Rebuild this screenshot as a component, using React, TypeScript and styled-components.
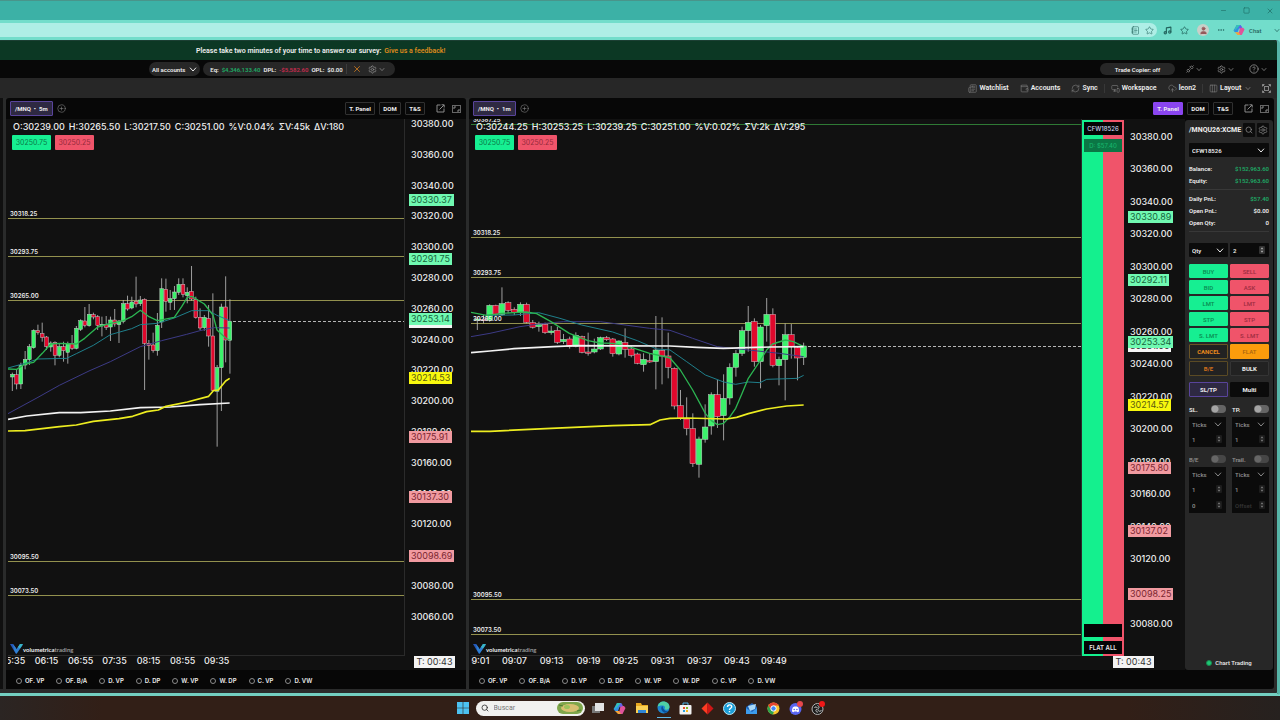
import React from "react";
import styled, { createGlobalStyle } from "styled-components";
import {
  CircleHelp,
  CirclePlus,
  CloudUpload,
  Columns3,
  Ellipsis,
  Minus,
  MonitorSmartphone,
  Music,
  Newspaper,
  NotebookText,
  RefreshCw,
  Search,
  Settings,
  Square,
  Star,
  Unplug,
  User,
  Wallet,
  X,
} from "lucide-react";

const GlobalStyle = createGlobalStyle`
  * { box-sizing: border-box; }
  html, body { margin: 0; padding: 0; background: #101010; }
  body {
    font-family: Roboto, "Liberation Sans", sans-serif;
    font-size: 7px;
    font-weight: 600;
    color: #eee;
  }
  button, input, select { font: inherit; color: inherit; margin: 0; border: 0; padding: 0; background: none; }
  svg { display: block; flex: none; }
`;

/* ---------- browser frame ---------- */

const Desktop = styled.div`
  min-height: 100vh;
  display: flex;
  flex-direction: column;
  background: #6fdccb;
`;

const TitleBar = styled.div`
  height: 20px;
  display: flex;
  align-items: center;
  justify-content: flex-end;
  gap: 16px;
  padding-right: 7px;
  background: #3cb1a6;
  border-top: 1px solid #49958b;
  color: #1d6a62;
`;

const WindowButton = styled.button`
  display: flex;
  width: 7px;
  justify-content: center;
`;

const BrowserBar = styled.div`
  height: 20px;
  display: flex;
  align-items: center;
  background: #72ddcb;
  color: #23645d;
`;

const AddressBar = styled.div`
  flex: 1;
  height: 14px;
  display: flex;
  align-items: center;
  justify-content: flex-end;
  gap: 5px;
  padding-right: 3px;
  border-radius: 0 7px 7px 0;
  background: #aeeee6;
`;

const BrowserTools = styled.div`
  width: 123px;
  display: flex;
  align-items: center;
  gap: 8px;
  padding-left: 6px;
`;

const Avatar = styled.span`
  width: 12px;
  height: 12px;
  border-radius: 50%;
  display: grid;
  place-items: center;
  background: #c9cfc8;
  color: #95595b;
`;

const CopilotChat = styled.button`
  flex: 1;
  display: flex;
  align-items: center;
  gap: 4px;
  font-size: 6px;
  font-weight: 500;
`;

const WebPage = styled.main`
  flex: 1;
  display: flex;
  flex-direction: column;
  background: #2a2b2b;
  border-right: 3px solid #56b5a8;
  border-bottom: 3px solid #73cfc1;
  border-radius: 0 4px 4px 0;
`;

/* ---------- app header ---------- */

const Survey = styled.div`
  height: 20px;
  padding-left: 196px;
  display: flex;
  align-items: center;
  gap: 3px;
  background: #0c3824;
  border-top: 1px solid #1c3f33;
  border-radius: 0 4px 0 0;
`;

const SurveyLink = styled.a`
  color: #dd8a1c;
  text-decoration: none;
`;

const AccountBar = styled.div`
  height: 18px;
  display: flex;
  align-items: center;
  gap: 3px;
  padding: 0 10px 0 149px;
  background: #080808;
  font-size: 6px;
`;

const Pill = styled.div<{ $pad?: number; $gap?: number }>`
  height: 14px;
  display: flex;
  align-items: center;
  gap: ${(p) => p.$gap ?? 4}px;
  padding: 0 ${(p) => p.$pad ?? 4}px;
  border-radius: 7px;
  background: #272727;
`;

const Spacer = styled.span`
  flex: 1;
`;

const Tone = styled.span<{ $c: string }>`
  color: ${(p) => p.$c};
`;

const VLine = styled.span`
  width: 1px;
  height: 10px;
  background: #3c3c3c;
`;

const MenuButton = styled.button<{ $ml?: number }>`
  display: flex;
  align-items: center;
  gap: 2px;
  margin-left: ${(p) => p.$ml ?? 0}px;
  color: #8d8d8d;
`;

const CopierButton = styled.button`
  width: 75px;
  height: 12px;
  border-radius: 6px;
  background: #272727;
`;

const NavBar = styled.nav`
  height: 20px;
  display: flex;
  align-items: center;
  justify-content: flex-end;
  gap: 11px;
  padding-right: 6px;
  background: #272727;
`;

const NavItem = styled.button<{ $rule?: boolean }>`
  display: flex;
  align-items: center;
  gap: 2px;
  ${(p) => p.$rule && "margin-left: -5px; padding-left: 6px; border-left: 1px solid #383838;"}
  svg { color: #858585; }
`;

/* ---------- workspace ---------- */

const Workspace = styled.div`
  flex: 1;
  display: flex;
  gap: 3px;
  padding: 0 3px 4px 0;
`;

const PanelEdge = styled.div`
  width: 3px;
  background: #101010;
`;

const Panel = styled.section<{ $grow: number }>`
  flex: ${(p) => p.$grow} 1 0;
  min-width: 0;
  display: flex;
  flex-direction: column;
  background: #070707;
  border-radius: 3px;
`;

const PanelHead = styled.header`
  height: 21px;
  display: flex;
  align-items: center;
  gap: 4px;
  padding: 0 5px 0 4px;
  font-size: 6px;
  font-weight: 700;
`;

const SymbolTab = styled.button`
  height: 15px;
  padding: 0 4px;
  border: 1px solid #59449b;
  border-radius: 1px;
  background: #2e2942;
  white-space: pre;
`;

const HeadIcon = styled.button<{ $ml?: number }>`
  display: flex;
  margin-left: ${(p) => p.$ml ?? 0}px;
  color: #8a8a8a;
`;

const HeadButton = styled.button<{ $active?: boolean; $w: number }>`
  width: ${(p) => p.$w}px;
  height: 13px;
  border: 1px solid ${(p) => (p.$active ? "#8a45f0" : "#303030")};
  border-radius: 1px;
  background: ${(p) => (p.$active ? "#8a45f0" : "#0a0a0a")};
`;

const PanelBody = styled.div`
  flex: 1;
  display: flex;
  min-height: 0;
`;

const ChartArea = styled.div`
  flex: 1;
  min-width: 0;
  display: flex;
  flex-direction: column;
  background: #111;
  font-family: Inter, "Liberation Sans", sans-serif;
`;

const PlotRow = styled.div`
  flex: 1;
  display: flex;
  padding-left: 2px;
`;

const Plot = styled.div`
  flex: 1;
  min-width: 0;
  position: relative;
  border-right: 1px solid #2b2b2b;
  border-bottom: 1px solid #2b2b2b;
`;

const PlotSvg = styled.svg`
  position: absolute;
  inset: 0;
  width: 100%;
  height: 100%;
`;

const PlotOverlay = styled.div`
  position: absolute;
  top: 2px;
  left: 4px;
`;

const Ohlc = styled.div`
  display: flex;
  gap: 4px;
  padding-left: 1px;
  font-size: 9px;
  line-height: 12px;
  font-weight: 500;
  white-space: nowrap;
`;

const QuoteRow = styled.div`
  display: flex;
  gap: 4px;
  margin-top: 2px;
`;

const Quote = styled.button<{ $buy?: boolean }>`
  width: 39px;
  height: 15px;
  font-size: 7px;
  font-weight: 400;
  border-radius: 1px;
  color: ${(p) => (p.$buy ? "#0a7a48" : "#962a3a")};
  background: ${(p) => (p.$buy ? "#16ef92" : "#f0546a")};
`;

const Watermark = styled.div`
  position: absolute;
  left: 2px;
  bottom: 1px;
  display: flex;
  align-items: center;
  font-size: 6px;
  font-weight: 700;
  font-family: Lato, "Noto Sans", sans-serif;
`;

const AxisSvg = styled.svg<{ $w: number }>`
  width: ${(p) => p.$w}px;
  min-height: 530px;
`;

const TimeRow = styled.div`
  height: 14px;
  display: flex;
  justify-content: space-between;
  font-size: 9px;
  font-weight: 500;
  padding: 0 0 0 2px;
`;

const Times = styled.div<{ $gap: number; $cut: number }>`
  display: flex;
  gap: ${(p) => p.$gap}px;
  padding-right: 10px;
  overflow: hidden;
  line-height: 10px;
  white-space: nowrap;
  span { flex: none; width: 25px; text-align: center; }
  span:first-child { margin-left: -${(p) => p.$cut}px; }
`;

const Countdown = styled.span<{ $mr: number }>`
  height: 12px;
  width: 41px;
  margin-right: ${(p) => p.$mr}px;
  text-align: center;
  line-height: 12px;
  font-weight: 400;
  color: #333;
  background: #f4f4f4;
  z-index: 1;
`;

const Studies = styled.div`
  height: 19px;
  display: flex;
  align-items: center;
  gap: 12px;
  padding-left: 10px;
  padding-top: 2px;
  font-family: Inter, "Liberation Sans", sans-serif;
  font-size: 6px;
  font-weight: 600;
  background: #070707;
`;

const Study = styled.label`
  display: flex;
  align-items: center;
  gap: 3px;
  input {
    appearance: none;
    width: 6px;
    height: 6px;
    border: 1px solid #8a8a8a;
    border-radius: 50%;
  }
`;

/* ---------- ladder between the plot and the price axis ---------- */

const Ladder = styled.div`
  width: 42px;
  display: flex;
  flex-direction: column;
  gap: 4px;
  padding: 2px;
  margin-top: 1px;
  font-size: 6px;
  font-weight: 500;
  background: linear-gradient(90deg, #14f08e 21px, #f0546a 21px);
`;

const LadderCell = styled.div<{ $pnl?: boolean }>`
  height: 13px;
  display: grid;
  place-items: center;
  color: ${(p) => (p.$pnl ? "#17b46b" : "#cfd6ef")};
  background: ${(p) => (p.$pnl ? "#0b7745" : "#050505")};
`;

const FlatAll = styled.button`
  height: 13px;
  background: #050505;
  font-weight: 600;
`;

/* ---------- trading side panel ---------- */

const TradePanel = styled.aside`
  width: 88px;
  margin: 1px 1px 19px 0;
  padding: 3px 4px 4px;
  display: flex;
  flex-direction: column;
  border-radius: 3px;
  background: #272727;
  font-size: 6px;
`;

const Row = styled.div<{ $mt?: number; $gap?: number }>`
  display: flex;
  align-items: center;
  gap: ${(p) => p.$gap ?? 2}px;
  margin-top: ${(p) => p.$mt ?? 0}px;
`;

const Ticker = styled.strong`
  flex: 1;
  min-width: 0;
  font-size: 7px;
  font-weight: 700;
  white-space: nowrap;
`;

const IconButton = styled.button`
  width: 12px;
  height: 14px;
  flex: none;
  display: grid;
  place-items: center;
  background: #0c0c0c;
  color: #999;
  border-radius: 1px;
`;

const Field = styled.div<{ $h?: number; $dim?: boolean }>`
  flex: 1;
  min-width: 0;
  height: ${(p) => p.$h ?? 14}px;
  display: flex;
  align-items: center;
  padding: 0 4px 0 3px;
  background: #0b0b0b;
  border-radius: 1px;
  color: ${(p) => (p.$dim ? "#8a8a8a" : "#eee")};
  select, input {
    flex: 1;
    min-width: 0;
    width: 0;
    appearance: none;
    outline: none;
  }
  input::placeholder { color: #333; }
`;

const Stats = styled.div`
  margin-top: 5px;
  margin-bottom: 1px;
`;

const Stat = styled.div`
  height: 12px;
  display: flex;
  align-items: center;
  justify-content: space-between;
`;

const Divider = styled.hr`
  width: 100%;
  height: 1px;
  border: 0;
  margin: 3px 0 2px;
  background: #383838;
`;

const OrderGrid = styled.div<{ $mt: number }>`
  display: grid;
  grid-template-columns: 1fr 1fr;
  gap: 2px;
  margin-top: ${(p) => p.$mt}px;
`;

type Kind = "buy" | "sell" | "cancel" | "flat" | "be" | "bulk" | "tabOn" | "tab";
const kinds: Record<Kind, [string, string, string]> = {
  buy: ["#16ef92", "#0a8a50", "#16ef92"],
  sell: ["#f0546a", "#9c2c40", "#f0546a"],
  cancel: ["#222", "#e88a1c", "#6a5424"],
  flat: ["#fb9c0c", "#a86410", "#fb9c0c"],
  be: ["#222", "#d0701c", "#5a4a24"],
  bulk: ["#222", "#eee", "#343434"],
  tabOn: ["#2e2942", "#eee", "#59449b"],
  tab: ["#0b0b0b", "#eee", "#0b0b0b"],
};

const OrderButton = styled.button<{ $kind: Kind }>`
  height: ${(p) => (p.$kind === "buy" || p.$kind === "sell" ? 14 : 15)}px;
  background: ${(p) => kinds[p.$kind][0]};
  color: ${(p) => kinds[p.$kind][1]};
  border: 1px solid ${(p) => kinds[p.$kind][2]};
  border-radius: 1px;
  font-weight: ${(p) => (p.$kind === "buy" || p.$kind === "sell" || p.$kind === "flat" ? 500 : 700)};
`;

const Switch = styled.label<{ $dim?: boolean }>`
  flex: 1;
  height: 10px;
  display: flex;
  align-items: center;
  justify-content: space-between;
  opacity: ${(p) => (p.$dim ? 0.5 : 1)};
  input {
    appearance: none;
    width: 15px;
    height: 8px;
    border-radius: 4px;
    background: radial-gradient(circle at 4px 4px, #a5a5a5 3px, #656565 4px);
  }
`;

const FieldStack = styled.div`
  flex: 1;
  min-width: 0;
  background: #0b0b0b;
  border-radius: 1px;
`;

const Status = styled.div`
  margin-top: auto;
  display: flex;
  align-items: center;
  justify-content: center;
  gap: 3px;
  font-weight: 500;
`;

const Dot = styled.span`
  width: 6px;
  height: 6px;
  border-radius: 50%;
  background: #1fc774;
  border: 1px solid #168a50;
`;

/* ---------- taskbar ---------- */

const Taskbar = styled.footer`
  height: 24px;
  display: flex;
  align-items: center;
  justify-content: center;
  gap: 8px;
  background: linear-gradient(90deg, #2b2523, #321f17 8%, #321f17 88%, #26211f);
`;

const TaskSearch = styled.label`
  width: 109px;
  height: 15px;
  margin: 0 -2px;
  display: flex;
  align-items: center;
  gap: 5px;
  padding: 0 2px 0 5px;
  border-radius: 8px;
  background: #f1f1ef;
  color: #333;
  input { flex: 1; min-width: 0; outline: none; font-weight: 400; }
  input::placeholder { color: #777; }
`;

const TaskIcon = styled.button<{ $running?: boolean }>`
  width: 14px;
  height: 20px;
  display: flex;
  align-items: center;
  justify-content: center;
  border-bottom: ${(p) => (p.$running ? "1px solid #5fb8e8" : "0")};
`;

/* ---------- chart data ---------- */

/* [direction, body top, body bottom, wick top, wick bottom], in thirds of a pixel */
type Candle = [0 | 1, number, number, number, number];

const candles5m: Candle[] = [
  [1, 523, 531, 518, 573], [0, 524, 552, 510, 568], [1, 496, 552, 488, 567], [1, 478, 495, 453, 508],
  [1, 440, 479, 432, 495], [1, 391, 443, 388, 446], [0, 392, 398, 374, 404], [0, 401, 412, 368, 425],
  [0, 411, 440, 408, 450], [1, 429, 441, 424, 455], [0, 428, 466, 424, 496], [1, 440, 466, 432, 472],
  [0, 440, 452, 425, 485], [1, 431, 457, 425, 491], [0, 431, 445, 405, 450], [1, 385, 445, 378, 448],
  [1, 362, 388, 358, 393], [0, 363, 376, 321, 382], [1, 343, 377, 312, 380], [0, 344, 351, 338, 358],
  [0, 350, 376, 345, 390], [1, 373, 378, 350, 409], [0, 374, 382, 348, 390], [1, 360, 381, 350, 423],
  [0, 360, 372, 327, 380], [1, 363, 374, 360, 429], [1, 311, 364, 300, 370], [0, 311, 327, 287, 332],
  [1, 306, 324, 290, 328], [0, 304, 312, 230, 322], [1, 300, 311, 288, 318], [0, 298, 430, 295, 570],
  [0, 430, 437, 420, 479], [0, 435, 452, 398, 458], [1, 376, 452, 339, 467], [1, 266, 366, 235, 384],
  [0, 268, 304, 236, 335], [1, 296, 307, 270, 330], [1, 276, 296, 258, 330], [1, 253, 277, 235, 285],
  [0, 253, 283, 235, 292], [1, 277, 287, 262, 310], [0, 274, 297, 198, 302], [0, 298, 353, 290, 356],
  [0, 352, 384, 325, 390], [1, 352, 383, 345, 392], [0, 355, 408, 315, 440], [0, 408, 571, 280, 573],
  [1, 503, 574, 495, 740], [1, 321, 503, 311, 633], [0, 321, 420, 229, 487], [1, 364, 421, 298, 521],
];

const candles1m: Candle[] = [
  [1, 147, 150, 140, 180], [0, 148, 152, 135, 160], [1, 106, 151, 103, 155], [0, 106, 134, 104, 138],
  [1, 101, 134, 52, 138], [0, 98, 121, 94, 130], [0, 118, 128, 112, 135], [1, 103, 128, 97, 138],
  [0, 103, 157, 98, 160], [0, 158, 172, 150, 176], [1, 163, 170, 155, 185], [0, 163, 188, 158, 192],
  [1, 183, 188, 168, 194], [0, 181, 217, 170, 222], [1, 208, 215, 192, 222], [0, 207, 230, 200, 236],
  [1, 196, 229, 187, 232], [0, 200, 247, 197, 250], [0, 246, 249, 188, 257], [1, 237, 246, 206, 250],
  [1, 203, 237, 200, 240], [0, 203, 209, 198, 213], [0, 207, 251, 204, 260], [1, 213, 252, 211, 256],
  [0, 218, 238, 175, 263], [0, 237, 256, 228, 262], [0, 252, 280, 248, 283], [1, 268, 284, 250, 305],
  [0, 272, 276, 250, 279], [1, 240, 275, 138, 358], [0, 241, 258, 142, 343], [0, 258, 292, 188, 325],
  [0, 295, 408, 292, 418], [0, 407, 446, 360, 450], [0, 447, 476, 382, 496], [0, 476, 581, 430, 591],
  [1, 507, 583, 500, 623], [1, 471, 508, 403, 518], [1, 374, 468, 367, 494], [0, 374, 440, 330, 474],
  [1, 385, 437, 313, 511], [1, 292, 384, 280, 404], [1, 250, 292, 240, 320], [1, 182, 250, 170, 258],
  [1, 157, 182, 108, 245], [0, 155, 275, 145, 290], [1, 171, 275, 165, 355], [1, 133, 167, 84, 215],
  [0, 133, 286, 115, 292], [1, 268, 287, 260, 346], [1, 194, 269, 160, 391], [0, 194, 230, 162, 266],
  [0, 233, 264, 228, 331], [1, 228, 262, 218, 285],
];

type Curve = [string, number, string];

const curves5m: Curve[] = [
  ["#3c3a86", 3, "24,641 114,592 178,556 267,513 331,485 421,440 485,422 560,403 600,392 640,383 689,384"],
  ["#1f7f8c", 3, "24,504 75,490 114,477 200,475 229,461 280,436 331,404 395,386 421,374 472,370 523,354 575,332 626,332 651,346 689,362"],
  ["#2cb552", 4, "24,507 50,508 75,492 101,487 127,460 152,432 180,430 229,432 254,415 293,381 331,370 370,362 395,350 421,331 447,350 472,362 523,352 545,320 562,292 575,289 613,312 639,345 651,390 677,414 689,420"],
  ["#f2f2f2", 5, "24,658 80,648 178,638 242,638 331,633 421,623 511,621 600,614 689,609"],
  ["#eded20", 5, "24,693 75,692 178,680 229,675 280,664 357,656 398,649 440,635 475,630 498,619 562,606 626,589 640,572 655,570 677,543 689,535"],
];

const curves1m: Curve[] = [
  ["#3c3a86", 3, "3,200 60,190 150,170 206,162 280,155 391,155 465,165 539,175 600,181 668,205 742,230 835,240 928,250 1001,260"],
  ["#1f7f8c", 3, "50,136 132,135 206,128 270,145 335,165 428,186 502,212 560,237 600,240 650,275 706,315 761,336 797,343 835,336 870,338 890,328 983,325 1001,316"],
  ["#2cb552", 4, "3,127 50,136 95,130 132,128 169,126 200,131 243,155 298,190 354,212 391,219 428,220 484,232 539,250 576,258 600,264 631,300 668,360 706,430 724,452 742,464 761,460 780,440 797,415 817,368 835,325 872,270 890,240 908,222 946,210 970,215 1001,230"],
  ["#f2f2f2", 5, "3,248 60,243 132,236 250,230 317,227 600,228 680,232 760,235 900,231 1001,230"],
  ["#eded20", 5, "3,484 60,484 243,475 428,467 540,464 570,450 600,445 650,444 770,447 800,442 835,431 890,417 950,408 1001,405"],
];

type Level = [number, string, boolean?];
type Badge = [number, string, string, number];

interface ChartProps {
  candles: Candle[];
  curves: Curve[];
  shift: [number, number];
  first: number;
  step: number;
  body: number;
  levels: Level[];
  last: number;
  lastFrom: number;
}

function PriceChart({ candles, curves, shift, first, step, body, levels, last, lastFrom }: ChartProps) {
  return (
    <PlotSvg role="img" aria-label="Price chart">
      {levels.map(([y, label, green]) => (
        <line key={label} x1="0" x2="100%" y1={y + 0.5} y2={y + 0.5} stroke={green ? "#2f7a35" : "#93914e"} />
      ))}
      <line x1={lastFrom} x2="100%" y1={last} y2={last} stroke="#b5b5b5" strokeDasharray="3 2" />
      <g transform={`translate(${shift[0]} ${shift[1]}) scale(0.33333)`}>
        {candles.map(([up, top, bottom, high, low], i) => {
          const x = first + i * step;
          return (
            <g key={i}>
              <line x1={x} x2={x} y1={high} y2={low} stroke="#b5b5b5" strokeWidth="2.6" />
              <rect x={x - body / 2} y={top} width={body} height={Math.max(bottom - top, 4)} fill={up ? "#3bf26b" : "#e0082c"} stroke="#d0d0d0" strokeWidth="1.4" />
            </g>
          );
        })}
        {curves.map(([color, width, points]) => (
          <polyline key={color} points={points} fill="none" stroke={color} strokeWidth={width} strokeLinejoin="round" />
        ))}
      </g>
      {levels.map(([y, label]) => (
        <text key={label} x="2" y={y - 2} fill="#eee" fontSize="6">{label}</text>
      ))}
    </PlotSvg>
  );
}

const badgeColors: Record<string, [string, string]> = {
  green: ["#70f9b1", "#17633c"],
  yellow: ["#f8f80e", "#5c5c10"],
  pink: ["#f19aa0", "#7b2630"],
  white: ["#f4f4f4", "#333333"],
};

interface AxisProps {
  width: number;
  from: number;
  to: number;
  top: number;
  perStep: number;
  badges: Badge[];
}

function PriceAxis({ width, from, to, top, perStep, badges }: AxisProps) {
  const prices: number[] = [];
  for (let p = from; p >= to; p -= 20) prices.push(p);
  return (
    <AxisSvg $w={width} aria-label="Price axis">
      {prices.map((p, i) => (
        <text key={p} x={width - 55} y={top + i * perStep + 3} fill="#eee" fontSize="9" fontWeight="500">{p}.00</text>
      ))}
      {badges.map(([y, label, tone, w]) => (
        <g key={y}>
          <rect x={width - 57} y={y - 6} width={w} height="12" fill={badgeColors[tone][0]} />
          <text x={width - 55} y={y + 3} fill={badgeColors[tone][1]} fontSize="9" fontWeight="400">{label}</text>
        </g>
      ))}
    </AxisSvg>
  );
}

function Chevron({ w = 8 }: { w?: number }) {
  return (
    <svg width={w} height="5" viewBox="0 0 8 5" fill="none" stroke="currentColor">
      <path d="M1 .7L4 4 7 .7" />
    </svg>
  );
}

function Logo() {
  return (
    <Watermark>
      <svg width="13" height="10" viewBox="0 0 13 10">
        <path d="M0 0h3l3 4v6z" fill="#2457b8" />
        <path d="M3 0l3.500 5L10 0l3 .5L6.500 10 4 6z" fill="#2f7fd0" />
        <path d="M10 0h3l-3 4.500-2-1.500z" fill="#38b6c6" />
      </svg>
      <span>volumetrica<Tone $c="#999">trading</Tone></span>
    </Watermark>
  );
}

const studies = ["OF. VP", "OF. B/A", "D. VP", "D. DP", "W. VP", "W. DP", "C. VP", "D. VW"];

function StudyRow() {
  return (
    <Studies>
      {studies.map((s) => (
        <Study key={s}>
          <input type="checkbox" />
          {s}
        </Study>
      ))}
    </Studies>
  );
}

function Head({ frame, active }: { frame: string; active?: boolean }) {
  return (
    <PanelHead>
      <SymbolTab>{"/MNQ  •  " + frame}</SymbolTab>
      <HeadIcon aria-label="Add tab"><CirclePlus size={9} strokeWidth={1.5} /></HeadIcon>
      <Spacer />
      <HeadButton $w={30} $active={active}>T. Panel</HeadButton>
      <HeadButton $w={22}>DOM</HeadButton>
      <HeadButton $w={20}>T&amp;S</HeadButton>
      <HeadIcon $ml={7} aria-label="Open in window">
        <svg width="9" height="9" viewBox="0 0 9 9" fill="none" stroke="currentColor">
          <path d="M4.500 1H1v7h7V4.500M3.500 5.500L8 1M5.500 .8H8.200V3.500" />
        </svg>
      </HeadIcon>
      <HeadIcon $ml={3} aria-label="Maximize">
        <svg width="9" height="8" viewBox="0 0 9 8" fill="none" stroke="currentColor">
          <rect x=".5" y=".5" width="8" height="7" stroke="#666" />
          <path d="M2 4V2h2M7 4v2H5" />
        </svg>
      </HeadIcon>
    </PanelHead>
  );
}

function Overlay({ values }: { values: string[] }) {
  return (
    <PlotOverlay>
      <Ohlc>{values.map((v) => <span key={v}>{v}</span>)}</Ohlc>
      <QuoteRow>
        <Quote $buy>30250.75</Quote>
        <Quote>30250.25</Quote>
      </QuoteRow>
    </PlotOverlay>
  );
}

function Stepper({ dim }: { dim?: boolean }) {
  return (
    <svg width="6" height="8" viewBox="0 0 6 8" fill={dim ? "#777" : "#aaa"}>
      <rect width="6" height="8" rx="1" fill={dim ? "#1c1c1c" : "#333"} />
      <path d="M1.500 3.200L3 1.200 4.500 3.200zM1.500 4.800L3 6.800 4.500 4.800z" />
    </svg>
  );
}

function PickField({ label, value, h, dim }: { label: string; value: string; h?: number; dim?: boolean }) {
  return (
    <Field $h={h} $dim={dim}>
      <select aria-label={label} defaultValue={value}><option>{value}</option></select>
      <Chevron />
    </Field>
  );
}

function NumberField({ label, value, h, dim, hint }: { label: string; value: string; h?: number; dim?: boolean; hint?: string }) {
  return (
    <Field $h={h} $dim={dim}>
      <input aria-label={label} defaultValue={value} placeholder={hint} />
      <Stepper dim={dim} />
    </Field>
  );
}

function TradingPanel() {
  const orders = [["BUY", "SELL"], ["BID", "ASK"], ["LMT", "LMT"], ["STP", "STP"], ["S. LMT", "S. LMT"]];
  return (
    <TradePanel>
      <Row>
        <Ticker>/MNQU26:XCME</Ticker>
        <IconButton aria-label="Search symbol"><Search size={8} /></IconButton>
        <IconButton aria-label="Panel settings"><Settings size={10} strokeWidth={1.5} /></IconButton>
      </Row>
      <Row $mt={6}><PickField label="Account" value="CFW18526" /></Row>
      <Stats>
        <Stat><span>Balance:</span><Tone $c="#1fa865">$152,963.60</Tone></Stat>
        <Stat><span>Equity:</span><Tone $c="#1fa865">$152,963.60</Tone></Stat>
        <Divider />
        <Stat><span>Daily PnL:</span><Tone $c="#1fa865">$57.40</Tone></Stat>
        <Stat><span>Open PnL:</span><span>$0.00</span></Stat>
        <Stat><span>Open Qty:</span><span>0</span></Stat>
        <Divider />
      </Stats>
      <Row $mt={8}>
        <PickField label="Quantity mode" value="Qty" />
        <NumberField label="Quantity" value="2" />
      </Row>
      <OrderGrid $mt={7}>
        {orders.map(([buy, sell]) => (
          <React.Fragment key={buy}>
            <OrderButton $kind="buy">{buy}</OrderButton>
            <OrderButton $kind="sell">{sell}</OrderButton>
          </React.Fragment>
        ))}
        <OrderButton $kind="cancel">CANCEL</OrderButton>
        <OrderButton $kind="flat">FLAT</OrderButton>
        <OrderButton $kind="be">B/E</OrderButton>
        <OrderButton $kind="bulk">BULK</OrderButton>
      </OrderGrid>
      <OrderGrid $mt={6}>
        <OrderButton $kind="tabOn">SL/TP</OrderButton>
        <OrderButton $kind="tab">Multi</OrderButton>
      </OrderGrid>
      <Row $mt={7} $gap={6}>
        <Switch>SL.<input type="checkbox" role="switch" /></Switch>
        <Switch>TP.<input type="checkbox" role="switch" /></Switch>
      </Row>
      <Row $mt={3} $gap={6}>
        {["Stop loss", "Take profit"].map((n) => (
          <FieldStack key={n}>
            <PickField label={n + " unit"} value="Ticks" dim />
            <NumberField label={n} value="1" h={16} dim />
          </FieldStack>
        ))}
      </Row>
      <Row $mt={7} $gap={6}>
        <Switch $dim>B/E<input type="checkbox" role="switch" /></Switch>
        <Switch $dim>Trail.<input type="checkbox" role="switch" /></Switch>
      </Row>
      <Row $mt={3} $gap={6}>
        {["Break even", "Trailing"].map((n, i) => (
          <FieldStack key={n}>
            <PickField label={n + " unit"} value="Ticks" dim />
            <NumberField label={n} value="1" h={16} dim />
            <NumberField label={n + " offset"} value={i ? "" : "0"} hint="Offset" h={16} dim />
          </FieldStack>
        ))}
      </Row>
      <Status><Dot />Chart Trading</Status>
    </TradePanel>
  );
}

function TaskbarIcons() {
  return (
    <>
      <TaskIcon aria-label="Task view">
        <svg width="14" height="12" viewBox="0 0 14 12"><rect x="1" y="4" width="8" height="7" fill="#777" /><rect x="4" y="1" width="9" height="8" fill="#e3e3e3" /></svg>
      </TaskIcon>
      <TaskIcon aria-label="Copilot"><CopilotMark size={13} /></TaskIcon>
      <TaskIcon aria-label="File Explorer">
        <svg width="14" height="12" viewBox="0 0 14 12"><path d="M1 1h5l1 2h6v8H1z" fill="#e9a820" /><path d="M1 4h12v7H1z" fill="#fbd155" /><rect x="3" y="8" width="8" height="3" fill="#2f86d6" /></svg>
      </TaskIcon>
      <TaskIcon aria-label="Edge" $running>
        <svg width="13" height="13" viewBox="0 0 13 13"><circle cx="6.500" cy="6.500" r="6" fill="#1c86d1" /><path d="M.6 6C1 2.500 3.500.5 6.500.5c3.500 0 6 2.500 6 5.300 0 2-1.500 3-3.300 3-1 0-1.800-.5-1.500-1.200C8.500 6 7.500 4.500 5.500 4.500 3 4.500 1 5 .6 6z" fill="#4fd0a4" /><path d="M5.500 5C3.500 6 4 10 7 11.500c2 .8 4-.5 4.500-1.500C9 11 6 9 5.500 5z" fill="#0c4f98" /></svg>
      </TaskIcon>
      <TaskIcon aria-label="Store">
        <svg width="13" height="13" viewBox="0 0 13 13"><path d="M4 3V1h5v2" fill="none" stroke="#4bb3e8" /><rect x=".5" y="3" width="12" height="9.500" rx="1" fill="#f2f2f2" /><rect x="4" y="5" width="2" height="2" fill="#e8502a" /><rect x="7" y="5" width="2" height="2" fill="#7db928" /><rect x="4" y="8" width="2" height="2" fill="#2a9fe0" /><rect x="7" y="8" width="2" height="2" fill="#f5b81c" /></svg>
      </TaskIcon>
      <TaskIcon aria-label="Red app">
        <svg width="13" height="13" viewBox="0 0 13 13"><path d="M6.500.5v12L.5 6.500z" fill="#ff3b22" /><path d="M6.500.5l6 6-6 6z" fill="#cf1616" /></svg>
      </TaskIcon>
      <TaskIcon aria-label="Help">
        <svg width="13" height="13" viewBox="0 0 13 13"><circle cx="6.500" cy="6.500" r="6" fill="#1d9fd8" stroke="#b9e6f7" /><path d="M4.500 5c0-3 4.200-2.600 4.200-.2 0 1.500-2.200 1.500-2.200 3.200M6.500 9v1.300" stroke="#fff" strokeWidth="1.400" fill="none" /></svg>
      </TaskIcon>
      <TaskIcon aria-label="Mail">
        <svg width="13" height="13" viewBox="0 0 13 13"><path d="M1 5l6-4 5 4v7H1z" fill="#1d62b8" /><path d="M3 4l8-2-1 5-5 2z" fill="#a9d8f7" /><path d="M1 6l6 4 5-4v6H1z" fill="#3d9cec" /></svg>
      </TaskIcon>
      <TaskIcon aria-label="Chrome">
        <svg width="13" height="13" viewBox="0 0 13 13"><circle cx="6.500" cy="6.500" r="6" fill="#f7c52c" /><path d="M1.300 3.500A6 6 0 0 1 11.700 3.500H6.500L4 8z" fill="#e5432f" /><path d="M1.300 3.500L4 8l3 1-1 3.500A6 6 0 0 1 1.300 3.500z" fill="#2da44e" /><circle cx="6.500" cy="6.500" r="2.700" fill="#4285f4" stroke="#fff" /></svg>
      </TaskIcon>
      <TaskIcon aria-label="Discord">
        <svg width="14" height="15" viewBox="0 0 14 15"><circle cx="6.500" cy="8" r="6" fill="#5865f2" /><path d="M3 10.500c0-2.500.6-4 1.300-4.500 1.500-.6 3-.6 4.500 0 .7.5 1.200 2 1.200 4.500l-1.500.8-.6-.9H5.100l-.6.900z" fill="#fff" /><circle cx="5.200" cy="8.500" r=".8" fill="#5865f2" /><circle cx="7.900" cy="8.500" r=".8" fill="#5865f2" /><circle cx="11" cy="3" r="3" fill="#e5484d" /></svg>
      </TaskIcon>
      <TaskIcon aria-label="OBS">
        <svg width="14" height="15" viewBox="0 0 14 15"><circle cx="6.500" cy="8" r="5.500" fill="#1b1b1b" stroke="#b5b5b5" /><path d="M6.500 4.500c2 .5 2 3 0 3.500M6 8c-2 1-1 3.500 1 3M7 8.500c0 2 2.500 2.500 3.500.5M3.500 7c.5-1.500 2-1.500 3 0" stroke="#ccc" fill="none" /><circle cx="11" cy="3" r="3" fill="#f01818" /></svg>
      </TaskIcon>
    </>
  );
}

function CopilotMark({ size }: { size: number }) {
  return (
    <svg width={size} height={size} viewBox="0 0 13 13">
      <path d="M4 1h4l1.500 2-3 2L5 9H2L.5 7z" fill="#2f8fe6" />
      <path d="M4 1h4l-3 3-4 4z" fill="#36c2b4" />
      <path d="M7.500 4H11l1.500 2-3 6h-4L4 10l2.500-1z" fill="#e0539a" />
      <path d="M8 1l2 3-3 1-1-1z" fill="#6b5be6" />
      <path d="M2 9h4l2 3H5z" fill="#f3a43a" />
    </svg>
  );
}

export default function App() {
  return (
    <Desktop>
      <GlobalStyle />
      <TitleBar>
        <WindowButton aria-label="Minimize"><Minus size={7} strokeWidth={2} /></WindowButton>
        <WindowButton aria-label="Restore"><Square size={7} strokeWidth={2} /></WindowButton>
        <WindowButton aria-label="Close"><X size={8} strokeWidth={2} /></WindowButton>
      </TitleBar>
      <BrowserBar>
        <AddressBar>
          <NotebookText size={9} strokeWidth={1.5} />
          <Star size={9} strokeWidth={1.5} />
        </AddressBar>
        <BrowserTools>
          <Music size={9} strokeWidth={3} />
          <Star size={9} strokeWidth={2} />
          <Avatar><User size={9} fill="currentColor" /></Avatar>
          <Ellipsis size={8} />
          <CopilotChat><CopilotMark size={12} />Chat<Spacer /><Chevron w={6} /></CopilotChat>
        </BrowserTools>
      </BrowserBar>
      <WebPage>
        <Survey>
          <span>Please take two minutes of your time to answer our survey:</span>
          <SurveyLink href="#">Give us a feedback!</SurveyLink>
        </Survey>
        <AccountBar>
          <Pill as="button" $pad={3}>All accounts<Chevron /></Pill>
          <Pill $pad={7} $gap={3}>
            <span>Eq:</span><Tone $c="#1fa865">$4,346,133.40</Tone>
            <span>DPL:</span><Tone $c="#c92c50">-$5,582.60</Tone>
            <span>OPL:</span><span>$0.00</span>
            <VLine />
            <MenuButton $ml={2} aria-label="Close positions"><X size={10} color="#c9781e" strokeWidth={2} /></MenuButton>
            <MenuButton $ml={3} aria-label="Account settings"><Settings size={9} strokeWidth={2} /><Chevron w={6} /></MenuButton>
            <span />
          </Pill>
          <Spacer />
          <CopierButton>Trade Copier: off</CopierButton>
          <MenuButton $ml={8} aria-label="Connections"><Unplug size={8} /><Chevron w={6} /></MenuButton>
          <MenuButton $ml={12} aria-label="Settings"><Settings size={9} /><Chevron w={6} /></MenuButton>
          <MenuButton $ml={12} aria-label="Help"><CircleHelp size={10} /><Chevron w={6} /></MenuButton>
        </AccountBar>
        <NavBar>
          <NavItem><Newspaper size={9} strokeWidth={1.5} />Watchlist</NavItem>
          <NavItem><Wallet size={9} strokeWidth={1.5} />Accounts</NavItem>
          <NavItem><RefreshCw size={9} strokeWidth={1.5} />Sync</NavItem>
          <NavItem $rule><MonitorSmartphone size={9} strokeWidth={1.5} />Workspace</NavItem>
          <NavItem><CloudUpload size={9} strokeWidth={1.5} />leon2</NavItem>
          <NavItem $rule><Columns3 size={9} strokeWidth={1.5} />Layout&nbsp;<Chevron w={6} /></NavItem>
          <NavItem aria-label="Fullscreen">
            <svg width="9" height="9" viewBox="0 0 9 9" fill="none" stroke="currentColor">
              <rect x="2.500" y="2.500" width="4" height="4" />
              <path d="M.5 2.500V.5h2M6.500 .5h2v2M8.500 6.500v2h-2M2.500 8.500h-2v-2M.5 .5l2 2M8.500 .5l-2 2M8.500 8.500l-2-2M.5 8.500l2-2" />
            </svg>
          </NavItem>
        </NavBar>
        <Workspace>
          <PanelEdge />
          <Panel $grow={460}>
            <Head frame="5m" />
            <PanelBody>
              <ChartArea>
                <PlotRow>
                  <Plot>
                    <PriceChart
                      candles={candles5m} curves={curves5m} shift={[-8, 81]} first={37} step={12.8} body={11}
                      levels={[[99, "30318.25"], [137, "30293.75"], [181, "30265.00"], [442, "30095.50"], [476, "30073.50"]]}
                      last={202.5} lastFrom={225}
                    />
                    <Overlay values={["O:30239.00", "H:30265.50", "L:30217.50", "C:30251.00", "%V:0.04%", "ΣV:45k", "ΔV:180"]} />
                    <Logo />
                  </Plot>
                  <PriceAxis
                    width={61} from={30380} to={30060} top={5} perStep={30.8}
                    badges={[[81, "30330.37", "green", 45], [140, "30291.75", "green", 43], [203, "30251.00", "white", 43], [200, "30253.14", "green", 43], [259, "30214.53", "yellow", 43], [318, "30175.91", "pink", 43], [378, "30137.30", "pink", 43], [437, "30098.69", "pink", 45]]}
                  />
                </PlotRow>
                <TimeRow>
                  <Times $gap={9} $cut={8}>
                    {["05:35", "06:15", "06:55", "07:35", "08:15", "08:55", "09:35"].map((t) => <span key={t}>{t}</span>)}
                  </Times>
                  <Countdown $mr={11}>T: 00:43</Countdown>
                </TimeRow>
              </ChartArea>
            </PanelBody>
            <StudyRow />
          </Panel>
          <Panel $grow={805}>
            <Head frame="1m" active />
            <PanelBody>
              <ChartArea>
                <PlotRow>
                  <Plot>
                    <PriceChart
                      candles={candles1m} curves={curves1m} shift={[-1, 151]} first={22} step={18.47} body={17}
                      levels={[[5, "30387.25", true], [118, "30318.25"], [158, "30293.75"], [204, "30265.00"], [480, "30095.50"], [515, "30073.50"]]}
                      last={227.5} lastFrom={337}
                    />
                    <Overlay values={["O:30244.25", "H:30253.25", "L:30239.25", "C:30251.00", "%V:0.02%", "ΣV:2k", "ΔV:295"]} />
                    <Logo />
                  </Plot>
                  <Ladder>
                    <LadderCell>CFW18526</LadderCell>
                    <LadderCell $pnl>D: $57.40</LadderCell>
                    <Spacer />
                    <LadderCell />
                    <FlatAll>FLAT ALL</FlatAll>
                  </Ladder>
                  <PriceAxis
                    width={61} from={30380} to={30080} top={18} perStep={32.48}
                    badges={[[98, "30330.89", "green", 45], [161, "30292.11", "green", 41], [227, "30251.00", "white", 43], [223, "30253.34", "green", 45], [286, "30214.57", "yellow", 43], [349, "30175.80", "pink", 43], [412, "30137.02", "pink", 43], [475, "30098.25", "pink", 45]]}
                  />
                </PlotRow>
                <TimeRow>
                  <Times $gap={12} $cut={6}>
                    {["09:01", "09:07", "09:13", "09:19", "09:25", "09:31", "09:37", "09:43", "09:49"].map((t) => <span key={t}>{t}</span>)}
                  </Times>
                  <Countdown $mr={31}>T: 00:43</Countdown>
                </TimeRow>
                <StudyRow />
              </ChartArea>
              <TradingPanel />
            </PanelBody>
          </Panel>
        </Workspace>
      </WebPage>
      <Taskbar>
        <TaskIcon aria-label="Start">
          <svg width="12" height="12" viewBox="0 0 12 12" fill="#4cc2f1"><path d="M0 0h5.700v5.700H0zM6.300 0H12v5.700H6.300zM0 6.300h5.700V12H0zM6.300 6.300H12V12H6.300z" /></svg>
        </TaskIcon>
        <TaskSearch>
          <Search size={8} strokeWidth={2.5} />
          <input aria-label="Buscar" placeholder="Buscar" />
          <svg width="26" height="12" viewBox="0 0 26 12"><rect width="26" height="12" rx="6" fill="#7fa64a" /><ellipse cx="13" cy="6" rx="9" ry="4" fill="#d8c070" /><ellipse cx="10" cy="5" rx="3" ry="2" fill="#9bc25a" /><path d="M2 3l4 1M20 9l4-1" stroke="#4d7a30" /></svg>
        </TaskSearch>
        <TaskbarIcons />
      </Taskbar>
    </Desktop>
  );
}
